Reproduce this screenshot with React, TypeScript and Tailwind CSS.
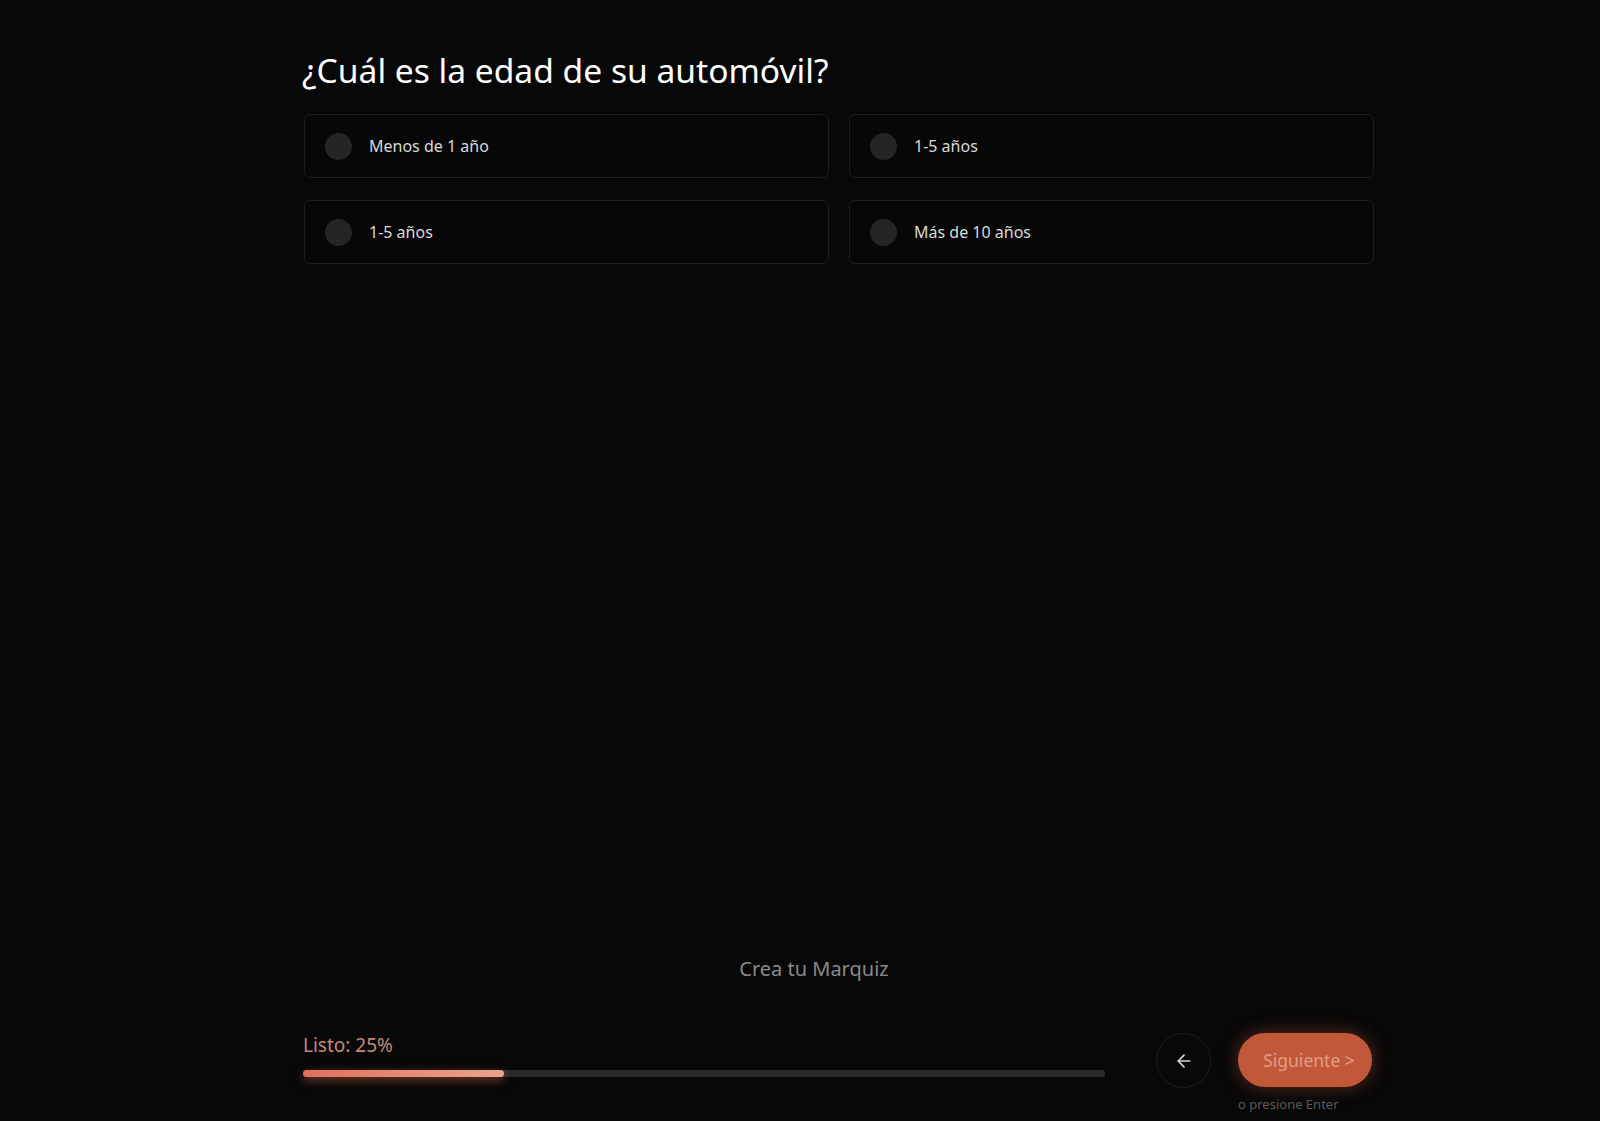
import { ArrowLeft } from "lucide-react";

const options = ["Menos de 1 año", "1-5 años", "1-5 años", "Más de 10 años"];

function OptionCard({ label }: { label: string }) {
  return (
    <button className="flex h-[64px] items-center gap-[17px] rounded-[6px] border border-[#1d1d1d] bg-[#070707] pl-[20px] text-left">
      <span className="h-[27px] w-[27px] shrink-0 rounded-full bg-[#252525]" />
      <span className="text-[16px] text-[#d9d9d9]">{label}</span>
    </button>
  );
}

export default function App() {
  const progress = 25;

  return (
    <div
      className="flex h-[1121px] flex-col bg-[#080808]"
      style={{ fontFamily: '"Noto Sans", "Open Sans", sans-serif' }}
    >
      {/* Question */}
      <section className="ml-[302px] w-[1072px] pt-[47px]">
        <h1 className="text-[33.6px] leading-[46px] text-white">¿Cuál es la edad de su automóvil?</h1>
        <div className="mt-[21px] grid grid-cols-2 gap-x-[20px] gap-y-[22px] pl-[2px]">
          {options.map((o, i) => (
            <OptionCard key={i} label={o} />
          ))}
        </div>
      </section>

      <div className="flex-1" />

      {/* Branding */}
      <div className="flex justify-center pl-[28px]">
        <span className="text-[20px] leading-[28px] text-[#8a8a8a]">Crea tu Marquiz</span>
      </div>

      {/* Footer */}
      <footer className="ml-[302px] mt-[50px] flex w-[1072px] items-start pb-[8px]">
        <div className="w-[803px] pl-[1px]">
          <div className="text-[19px] leading-[24px] text-[#c48a76]">Listo: {progress}%</div>
          <div className="mt-[13px] h-[7px] w-full rounded-full bg-[#2a2a2a]">
            <div
              className="h-full rounded-full bg-gradient-to-r from-[#e0705a] to-[#eaa48e] shadow-[0_3px_10px_rgba(224,112,90,0.55)]"
              style={{ width: `${progress}%` }}
            />
          </div>
        </div>
        <button className="ml-[51px] flex h-[55px] w-[55px] items-center justify-center rounded-full border border-[#1e1e1e] bg-[#080808] text-[#d4d4d4]">
          <ArrowLeft size={20} strokeWidth={2} />
        </button>
        <div className="ml-[27px] flex flex-col">
          <button className="flex h-[54px] w-[134px] items-center justify-center rounded-full bg-[#c2583a] pl-[8px] text-[17.5px] text-[#e59c84] shadow-[0_0_18px_rgba(195,89,58,0.45)]">
            Siguiente &gt;
          </button>
          <span className="mt-[8px] text-[13px] leading-[18px] text-[#5a5a5a]">o presione Enter</span>
        </div>
      </footer>
    </div>
  );
}
